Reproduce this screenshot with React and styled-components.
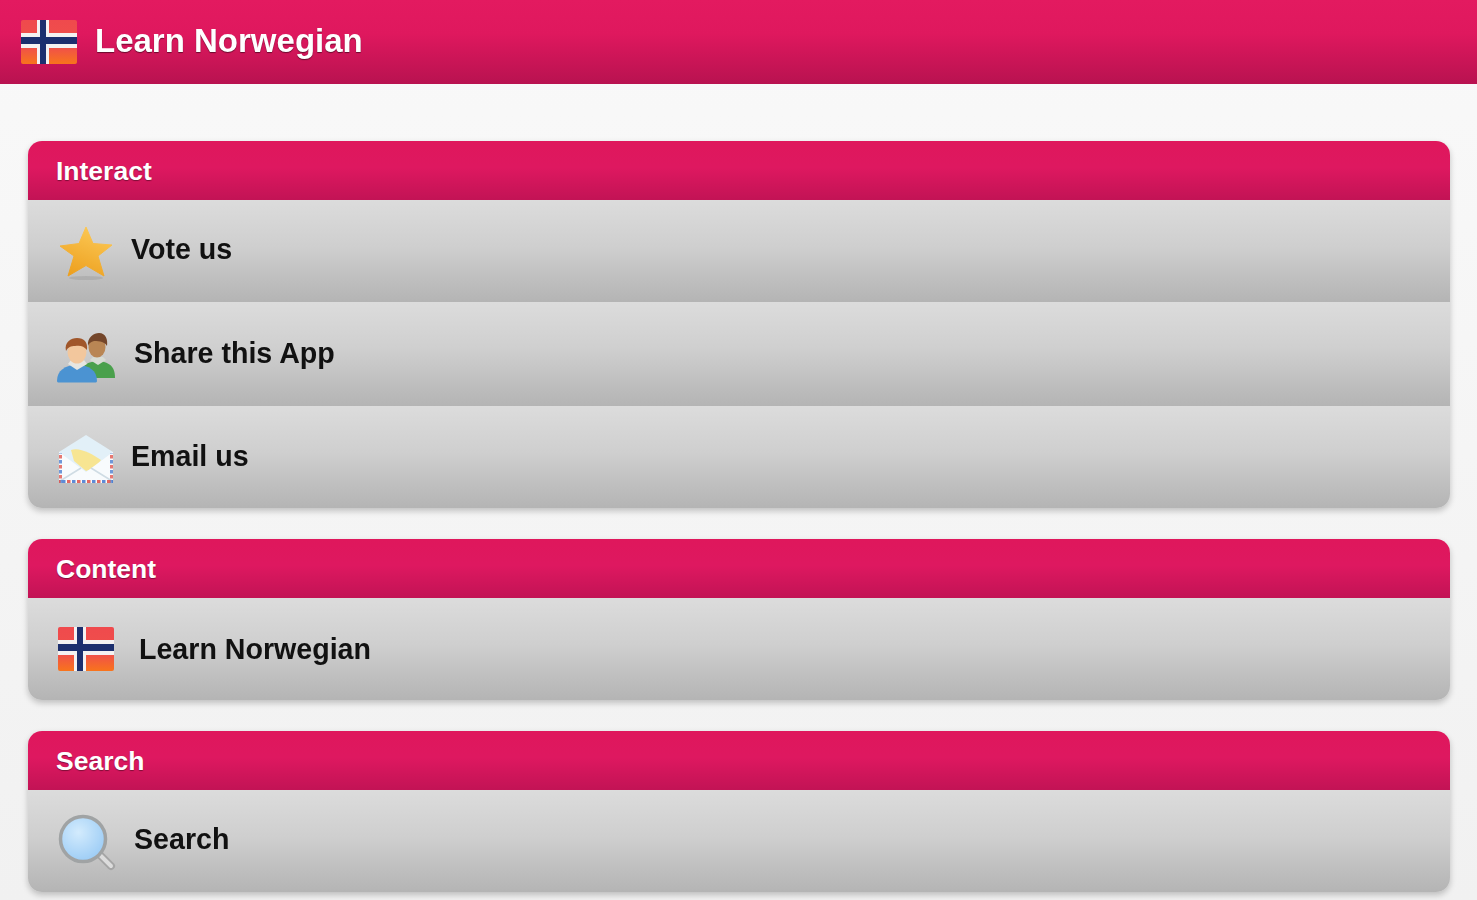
import React from "react";
import styled, { createGlobalStyle } from "styled-components";

const GlobalStyle = createGlobalStyle`
  html, body {
    margin: 0;
    padding: 0;
    background: #f6f6f6;
    font-family: "Liberation Sans", Arial, sans-serif;
    overflow: hidden;
  }
`;

const FlagIcon = () => (
  <svg width="58" height="46" viewBox="0 0 58 46">
    <defs>
      <linearGradient id="flagRed" x1="0" y1="0" x2="0" y2="1">
        <stop offset="0" stopColor="#ef4a4d" />
        <stop offset="0.62" stopColor="#f0504a" />
        <stop offset="1" stopColor="#f8741c" />
      </linearGradient>
    </defs>
    <rect x="1" y="1" width="56" height="44" rx="2" fill="url(#flagRed)" />
    <rect x="17" y="1" width="12" height="44" fill="#f4f2f2" />
    <rect x="1" y="14" width="56" height="15" fill="#f4f2f2" />
    <rect x="20" y="1" width="6" height="44" fill="#1c2f6e" />
    <rect x="1" y="18" width="56" height="7" fill="#1c2f6e" />
  </svg>
);

const StarIcon = () => (
  <svg width="58" height="60" viewBox="0 0 58 60">
    <defs>
      <linearGradient id="starFill" x1="0.7" y1="0" x2="0.3" y2="1">
        <stop offset="0" stopColor="#fcc956" />
        <stop offset="1" stopColor="#eda01f" />
      </linearGradient>
    </defs>
    <ellipse cx="29" cy="57" rx="17" ry="2" fill="#a8a8a8" opacity="0.7" />
    <path
      d="M29 6 L36 22.5 L55 24 L41 35 L47 55 L29 44.5 L11 55 L17 35 L3 25 L22 22.5 Z"
      fill="url(#starFill)"
      stroke="url(#starFill)"
      strokeWidth="1"
      strokeLinejoin="round"
    />
  </svg>
);

const PeopleIcon = () => (
  <svg width="60" height="58" viewBox="0 -10 60 58">
    <path d="M24 38 C26 29 33 27 42 26 C52 27 59 30 59 43 L28 43 Z" fill="#4aa04c" />
    <path d="M34 25 L42 30 L50 25 L47 22 L37 22 Z" fill="#d8dcd4" />
    <ellipse cx="41" cy="12" rx="8.5" ry="10.5" fill="#b98654" />
    <path d="M32 11 C31 2 38 -2 43 -2 C50 -2 52 5 51 11 C49 7 44 6 38 6 C35 7 33 8 32 11 Z" fill="#74462a" />
    <path d="M1 46 C1 35 9 31 21 29 C33 31 41 35 41 46 C41 47 40 47.5 39 47.5 L3 47.5 C2 47.5 1 47 1 46 Z" fill="#4b93d2" />
    <path d="M12 29 L21 35 L31 29 L28 25 L15 25 Z" fill="#e6e6e2" />
    <ellipse cx="21" cy="17" rx="9.5" ry="11.5" fill="#f2c79d" />
    <path d="M10 16 C8 7 15 3 21 3 C28 3 32 7 31 15 C28 11 24 10 19 11 C15 11 12 12 10 16 Z" fill="#a0562a" />
  </svg>
);

const MailIcon = () => (
  <svg width="58" height="52" viewBox="0 -4 58 52">
    <defs>
      <pattern id="airmail" width="10" height="3" patternUnits="userSpaceOnUse">
        <rect width="3.5" height="3" fill="#e2574f" />
        <rect x="5" width="3.5" height="3" fill="#4d7fd0" />
      </pattern>
      <pattern id="airmailSide" width="3" height="10" patternUnits="userSpaceOnUse">
        <rect width="3" height="3.5" fill="#e2574f" />
        <rect y="5" width="3" height="3.5" fill="#4d7fd0" />
      </pattern>
    </defs>
    <path d="M2 17 L29 0 L56 17 L56 48 L2 48 Z" fill="#e2f0f8" />
    <path d="M14 15 C22 12 34 18 44 25 L38 33 L29 36 L17 26 Z" fill="#f7e592" />
    <path d="M2 17 L29 37 L56 17 L56 48 L2 48 Z" fill="#f8fbfd" />
    <path d="M3 46 L24 33 M55 46 L34 33" stroke="#cfdce4" strokeWidth="1.5" fill="none" />
    <rect x="2" y="18" width="3" height="30" fill="url(#airmailSide)" opacity="0.8" />
    <rect x="53" y="18" width="3" height="30" fill="url(#airmailSide)" opacity="0.8" />
    <rect x="2" y="45" width="54" height="3" fill="url(#airmail)" opacity="0.9" />
  </svg>
);

const SearchIcon = () => (
  <svg width="60" height="60" viewBox="0 0 60 60">
    <defs>
      <radialGradient id="lens" cx="0.4" cy="0.35" r="0.7">
        <stop offset="0" stopColor="#d3ebfd" />
        <stop offset="1" stopColor="#9acbf5" />
      </radialGradient>
    </defs>
    <line x1="44" y1="44" x2="55" y2="55" stroke="#a5a5a5" strokeWidth="8" strokeLinecap="round" />
    <line x1="44" y1="44" x2="55" y2="55" stroke="#dcdcdc" strokeWidth="4" strokeLinecap="round" />
    <circle cx="27" cy="28" r="22.5" fill="url(#lens)" stroke="#a0a3a4" strokeWidth="3.5" />
  </svg>
);

const sections = [
  {
    title: "Interact",
    rows: [
      { label: "Vote us", Icon: StarIcon, textX: 131, rowHeight: 102, lift: 3 },
      { label: "Share this App", Icon: PeopleIcon, textX: 134, rowHeight: 104, lift: 2 },
      { label: "Email us", Icon: MailIcon, textX: 131, rowHeight: 102, lift: 2 },
    ],
  },
  {
    title: "Content",
    rows: [{ label: "Learn Norwegian", Icon: FlagIcon, textX: 139, rowHeight: 102, lift: 0 }],
  },
  {
    title: "Search",
    rows: [{ label: "Search", Icon: SearchIcon, textX: 134, rowHeight: 102, lift: 4 }],
  },
];

export default function App() {
  return (
    <Page>
      <GlobalStyle />
      <TopBar>
        <TopFlag>
          <FlagIcon />
        </TopFlag>
        <AppTitle>Learn Norwegian</AppTitle>
      </TopBar>
      <Content>
        {sections.map((section) => (
          <Panel key={section.title}>
            <PanelHeader>{section.title}</PanelHeader>
            {section.rows.map(({ label, Icon, textX, rowHeight, lift }) => (
              <Row key={label} $height={rowHeight}>
                <IconSlot>
                  <Icon />
                </IconSlot>
                <RowLabel $left={textX} $lift={lift}>
                  {label}
                </RowLabel>
              </Row>
            ))}
          </Panel>
        ))}
      </Content>
    </Page>
  );
}

const Page = styled.div`
  width: 1477px;
  height: 900px;
  overflow: hidden;
  background: linear-gradient(#f9f9f9, #f1f1f1);
`;

const TopBar = styled.header`
  height: 84px;
  box-sizing: border-box;
  padding: 0 0 1px 20px;
  display: flex;
  align-items: center;
  gap: 17px;
  background: linear-gradient(#e31a60 0%, #df185e 40%, #b81250 100%);
`;

const TopFlag = styled.div`
  display: flex;
  filter: blur(0.7px);
`;

const AppTitle = styled.h1`
  margin: 0 0 2px;
  color: #fff;
  font-size: 33px;
  font-weight: 700;
  text-shadow: 0 1px 1px rgba(0, 0, 0, 0.5);
  filter: blur(0.6px);
`;

const Content = styled.main`
  padding: 57px 27px 0 28px;
  display: flex;
  flex-direction: column;
  gap: 31px;
`;

const Panel = styled.section`
  border-radius: 14px;
  overflow: hidden;
  box-shadow: 0 3px 6px rgba(0, 0, 0, 0.22);
  filter: blur(0.6px);
`;

const PanelHeader = styled.div`
  height: 59px;
  box-sizing: border-box;
  padding: 1px 0 0 28px;
  display: flex;
  align-items: center;
  color: #fff;
  font-size: 26.5px;
  font-weight: 700;
  text-shadow: 0 1px 1px rgba(0, 0, 0, 0.4);
  background: linear-gradient(#df175c 0%, #de1860 45%, #c21355 100%);
`;

const Row = styled.div`
  height: ${(p) => p.$height}px;
  display: flex;
  align-items: center;
  background: linear-gradient(#dcdcdc 0%, #cfcfcf 45%, #b4b4b4 100%);
`;

const IconSlot = styled.div`
  width: 116px;
  display: flex;
  justify-content: center;
  align-items: center;
`;

const RowLabel = styled.span`
  margin-left: ${(p) => p.$left - 28 - 116}px;
  margin-bottom: ${(p) => p.$lift}px;
  color: #111;
  font-size: 28.6px;
  font-weight: 700;
`;
